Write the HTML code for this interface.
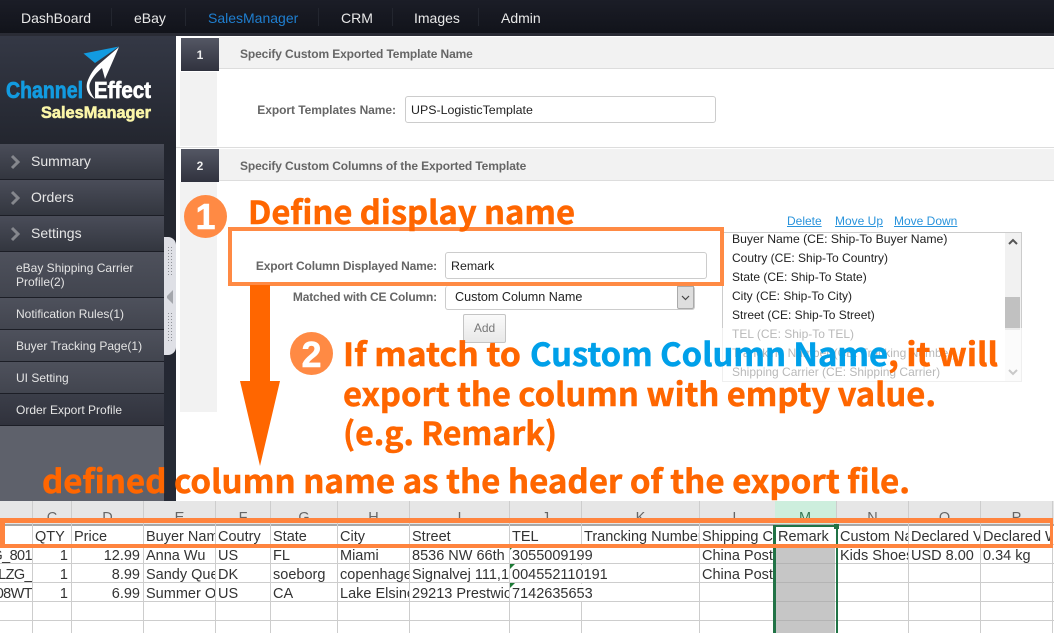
<!DOCTYPE html>
<html lang="en">
<head>
<meta charset="utf-8">
<title>Export Template</title>
<style>
html,body{margin:0;padding:0;background:#fff}
#p{position:relative;width:1054px;height:633px;overflow:hidden;background:#fff;font-family:"Liberation Sans",sans-serif}
#p div{position:absolute;box-sizing:border-box}
.nav{top:10px;font-size:14px;line-height:17px;color:#e8e8e8}
.sep{top:8px;width:1px;height:18px;background:#23262f}
.m{left:0;width:164px;background:linear-gradient(#4a4d59,#33363f);border-bottom:1px solid #1c1e26;color:#e6e6e6;font-size:14px}
.m span{position:absolute;left:31px;top:9px;line-height:17px}
.m svg{position:absolute;left:9px;top:10px}
.s{left:0;width:164px;background:linear-gradient(#4e515c,#42454f);border-bottom:1px solid #1c1e26;color:#e4e4e4;font-size:12px;line-height:14px;padding-left:16px}
.num{left:181px;width:38px;height:33px;background:linear-gradient(#545764,#30323e);color:#eee;font-weight:bold;font-size:12px;text-align:center;line-height:34px}
.band{left:219px;width:835px;height:32px;background:#f2f2f2;border-bottom:1px solid #ddd;color:#666;font-weight:bold;font-size:12px;line-height:34px;padding-left:21px;letter-spacing:-.12px}
.lbl{color:#666;font-weight:bold;font-size:12px;line-height:14px;white-space:nowrap;text-align:right;letter-spacing:-.17px}
.inp{background:#fff;border:1px solid #ccc;border-radius:3px;font-size:12.4px;color:#222;line-height:24px;padding-left:5px}
.lnk{top:214px;color:#2a94dc;font-size:12px;line-height:14px;text-decoration:underline}
.li{left:732px;font-size:12px;line-height:14px;color:#222;white-space:nowrap}
.h{top:508px;height:20px;text-align:center;color:#666;font-size:14.5px;line-height:20px}
.c{height:17px;margin-top:1px;font-size:14.5px;line-height:20px;color:#333;white-space:nowrap;overflow:hidden;padding-left:2px;font-family:"Liberation Sans","Noto Sans CJK SC",sans-serif}
.r{text-align:right;padding:0 3px 0 0}
.a{left:-20px;width:52px;padding:0;text-align:right;letter-spacing:-.6px}
.w{background:#fff}
.vl{top:501px;width:1px;height:132px;background:#cdcdcd}
.hl{left:0;width:1054px;height:1px;background:#cdcdcd}
.tri{width:0;height:0;border-top:5px solid #1d7a35;border-right:5px solid transparent}
</style>
</head>
<body>
<div id="p">
  <!-- top nav -->
  <div style="left:0;top:0;width:1054px;height:34px;background:linear-gradient(#1b1d27,#11131a)"></div>
  <div style="left:0;top:33px;width:1054px;height:3px;background:#2a2c35"></div>
  <div class="nav" style="left:21px">DashBoard</div>
  <div class="sep" style="left:111px"></div>
  <div class="nav" style="left:134px">eBay</div>
  <div class="sep" style="left:185px"></div>
  <div class="nav" style="left:208px;color:#1f7fd0">SalesManager</div>
  <div class="sep" style="left:318px"></div>
  <div class="nav" style="left:341px">CRM</div>
  <div class="sep" style="left:392px"></div>
  <div class="nav" style="left:414px">Images</div>
  <div class="sep" style="left:478px"></div>
  <div class="nav" style="left:501px">Admin</div>

  <!-- sidebar -->
  <div style="left:0;top:36px;width:176px;height:465px;background:linear-gradient(#343845 0,#23262f 108px,#262a35 100%)"></div>
  <svg style="position:absolute;left:0;top:36px" width="164" height="108">
    <path d="M83.500 17.500L119 10.500L95 27Z" fill="#129be0"/>
    <path d="M119 11L98 29C94 33 91 37 88 44C85 51 87 59 95 63C91 58 88 52 90 47C92 42 97 36 102 32L105 43Z" fill="#fff"/>
    <text x="6" y="62" font-family="Liberation Sans" font-weight="bold" font-size="23" fill="#129be0" stroke="#129be0" stroke-width=".7" textLength="77" lengthAdjust="spacingAndGlyphs">Channel</text>
    <text x="94" y="62" font-family="Liberation Sans" font-weight="bold" font-size="23" fill="#fff" stroke="#fff" stroke-width=".7" textLength="57" lengthAdjust="spacingAndGlyphs">Effect</text>
    <text x="41" y="82" font-family="Liberation Sans" font-weight="bold" font-size="17" fill="#fbf6a8" stroke="#fbf6a8" stroke-width=".6" textLength="110" lengthAdjust="spacingAndGlyphs">SalesManager</text>
  </svg>
  <div class="m" style="top:144px;height:36px"><svg width="12" height="16"><path d="M3 2L9 8L3 14" fill="none" stroke="#85878d" stroke-width="3"/></svg><span>Summary</span></div>
  <div class="m" style="top:180px;height:36px"><svg width="12" height="16"><path d="M3 2L9 8L3 14" fill="none" stroke="#85878d" stroke-width="3"/></svg><span>Orders</span></div>
  <div class="m" style="top:216px;height:36px"><svg width="12" height="16"><path d="M3 2L9 8L3 14" fill="none" stroke="#85878d" stroke-width="3"/></svg><span>Settings</span></div>
  <div class="s" style="top:252px;height:46px;padding-top:9px">eBay Shipping Carrier<br>Profile(2)</div>
  <div class="s" style="top:298px;height:32px;padding-top:9px">Notification Rules(1)</div>
  <div class="s" style="top:330px;height:32px;padding-top:9px">Buyer Tracking Page(1)</div>
  <div class="s" style="top:362px;height:32px;padding-top:9px">UI Setting</div>
  <div class="s" style="top:394px;height:32px;padding-top:9px;background:linear-gradient(#3b3e49,#30323c)">Order Export Profile</div>
  <div style="left:0;top:426px;width:164px;height:75px;background:#5e616b"></div>
  <!-- splitter -->
  <div style="left:164px;top:237px;width:12px;height:118px;background:#dfe0e6;border-radius:0 8px 8px 0"></div>
  <svg style="position:absolute;left:164px;top:237px" width="12" height="118">
    <path d="M3 59L9 53V67L3 61Z" fill="#a4a6ac"/>
    <g fill="#8e9096">
    <path d="M4 10h1v1h-1zM7 10h1v1h-1zM4 13h1v1h-1zM7 13h1v1h-1zM4 16h1v1h-1zM7 16h1v1h-1zM4 19h1v1h-1zM7 19h1v1h-1zM4 22h1v1h-1zM7 22h1v1h-1zM4 25h1v1h-1zM7 25h1v1h-1zM4 28h1v1h-1zM7 28h1v1h-1zM4 31h1v1h-1zM7 31h1v1h-1zM4 34h1v1h-1zM7 34h1v1h-1zM4 37h1v1h-1zM7 37h1v1h-1zM4 76h1v1h-1zM7 76h1v1h-1zM4 79h1v1h-1zM7 79h1v1h-1zM4 82h1v1h-1zM7 82h1v1h-1zM4 85h1v1h-1zM7 85h1v1h-1zM4 88h1v1h-1zM7 88h1v1h-1zM4 91h1v1h-1zM7 91h1v1h-1zM4 94h1v1h-1zM7 94h1v1h-1zM4 97h1v1h-1zM7 97h1v1h-1zM4 100h1v1h-1zM7 100h1v1h-1zM4 103h1v1h-1zM7 103h1v1h-1z"/></g>
  </svg>

  <!-- section 1 -->
  <div class="band" style="top:37px">Specify Custom Exported Template Name</div>
  <div class="num" style="top:38px">1</div>
  <div style="left:180px;top:72px;width:37px;height:74px;background:#f2f2f2"></div>
  <div class="lbl" style="left:200px;top:103px;width:196px;letter-spacing:-.05px">Export Templates Name:</div>
  <div class="inp" style="left:405px;top:96px;width:311px;height:27px;line-height:26px;padding-left:5px">UPS-LogisticTemplate</div>
  <div style="left:176px;top:147px;width:878px;height:1px;background:#ddd"></div>

  <!-- section 2 -->
  <div class="band" style="top:149px">Specify Custom Columns of the Exported Template</div>
  <div class="num" style="top:149px">2</div>
  <div style="left:180px;top:182px;width:37px;height:230px;background:#f2f2f2"></div>

  <div class="lnk" style="left:787px">Delete</div>
  <div class="lnk" style="left:835px">Move Up</div>
  <div class="lnk" style="left:894px">Move Down</div>

  <!-- listbox -->
  <div style="left:722px;top:232px;width:300px;height:150px;background:#fff;border:1px solid #ccc"></div>
  <div style="left:1005px;top:233px;width:16px;height:148px;background:#f1f1f1"></div>
  <div style="left:1005px;top:297px;width:15px;height:33px;background:#c1c1c1"></div>
  <svg style="position:absolute;left:1005px;top:233px" width="16" height="148">
    <path d="M4 11L8 7L12 11" fill="none" stroke="#555" stroke-width="2"/>
    <path d="M4 137L8 141L12 137" fill="none" stroke="#555" stroke-width="2"/>
  </svg>
  <div class="li" style="top:232px;font-size:12.2px">Buyer Name (CE: Ship-To Buyer Name)</div>
  <div class="li" style="top:251px">Coutry (CE: Ship-To Country)</div>
  <div class="li" style="top:270px">State (CE: Ship-To State)</div>
  <div class="li" style="top:289px">City (CE: Ship-To City)</div>
  <div class="li" style="top:308px">Street (CE: Ship-To Street)</div>
  <div class="li" style="top:327px">TEL (CE: Ship-To TEL)</div>
  <div class="li" style="top:346px">Trancking Number (CE: Tracking Number)</div>
  <div class="li" style="top:365px">Shipping Carrier (CE: Shipping Carrier)</div>
  <div style="left:722px;top:328px;width:300px;height:55px;background:rgba(255,255,255,.68)"></div>

  <!-- form rows -->
  <div style="left:228px;top:227px;width:496px;height:59px;border:4px solid #ff8a44;background:#fff"></div>
  <div class="lbl" style="left:200px;top:259px;width:237px">Export Column Displayed Name:</div>
  <div class="inp" style="left:445px;top:252px;width:262px;height:27px;line-height:26px;padding-left:5px">Remark</div>
  <div style="left:228px;top:282px;width:496px;height:4px;background:#ff8a44"></div>
  <div class="lbl" style="left:200px;top:290px;width:237px">Matched with CE Column:</div>
  <div class="inp" style="left:445px;top:286px;width:250px;height:24px;line-height:22px;padding-left:9px;border-top:0;font-size:12.6px">Custom Column Name</div>
  <div style="left:677px;top:286px;width:17px;height:23px;background:#dedede;border:1px solid #aaa;border-radius:0 0 2px 2px"></div>
  <svg style="position:absolute;left:677px;top:286px" width="17" height="23"><path d="M5 10L8.500 13.500L12 10" fill="none" stroke="#444" stroke-width="1.200"/></svg>
  <div style="left:463px;top:314px;width:43px;height:29px;background:linear-gradient(#fafafa,#e8e8e8);border:1px solid #c4c4c4;border-radius:2px;color:#777;font-size:12px;line-height:27px;text-align:center">Add</div>

  <!-- spreadsheet -->
  <div style="left:0;top:501px;width:1054px;height:24px;background:#e6e6e6"></div>
  <div style="left:775px;top:501px;width:62px;height:24px;background:#cdeedd"></div>
  <div style="left:0;top:524px;width:1054px;height:2px;background:#a8a8a8"></div>
  <div class="hl" style="top:544px"></div>
  <div class="hl" style="top:563px"></div>
  <div class="hl" style="top:582px"></div>
  <div class="hl" style="top:601px"></div>
  <div class="hl" style="top:620px"></div>
  <div class="vl" style="left:32px"></div><div class="vl" style="left:71px"></div><div class="vl" style="left:143px"></div>
  <div class="vl" style="left:215px"></div><div class="vl" style="left:270px"></div><div class="vl" style="left:337px"></div>
  <div class="vl" style="left:409px"></div><div class="vl" style="left:509px"></div><div class="vl" style="left:581px"></div>
  <div class="vl" style="left:699px"></div><div class="vl" style="left:836px"></div><div class="vl" style="left:908px"></div>
  <div class="vl" style="left:980px"></div><div class="vl" style="left:1052px"></div>
  <div style="left:775px;top:544px;width:60px;height:89px;background:#c6c6c6"></div>
  <div style="left:775px;top:563px;width:60px;height:1px;background:#b4b4b4"></div>
  <div style="left:775px;top:582px;width:60px;height:1px;background:#b4b4b4"></div>
  <div style="left:775px;top:601px;width:60px;height:1px;background:#b4b4b4"></div>
  <div style="left:775px;top:620px;width:60px;height:1px;background:#b4b4b4"></div>
  <div style="left:773px;top:525px;width:3px;height:108px;background:#217346"></div>
  <div style="left:836px;top:525px;width:2px;height:108px;background:#217346"></div>
  <div style="left:773px;top:525px;width:65px;height:2px;background:#217346"></div>
  <div style="left:834px;top:524px;width:5px;height:5px;background:#217346"></div>

  <div class="h" style="left:33px;width:38px">C</div><div class="h" style="left:72px;width:71px">D</div>
  <div class="h" style="left:144px;width:71px">E</div><div class="h" style="left:216px;width:54px">F</div>
  <div class="h" style="left:271px;width:66px">G</div><div class="h" style="left:338px;width:71px">H</div>
  <div class="h" style="left:410px;width:99px">I</div><div class="h" style="left:510px;width:71px">J</div>
  <div class="h" style="left:582px;width:117px">K</div><div class="h" style="left:700px;width:73px">L</div>
  <div class="h" style="left:775px;width:60px;color:#3a7a58">M</div><div class="h" style="left:837px;width:71px">N</div>
  <div class="h" style="left:909px;width:71px">O</div><div class="h" style="left:981px;width:71px">P</div>

  <!-- header row -->
  <div class="c" style="left:33px;top:526px;width:38px">QTY</div>
  <div class="c" style="left:72px;top:526px;width:71px">Price</div>
  <div class="c" style="left:144px;top:526px;width:71px">Buyer Name</div>
  <div class="c" style="left:216px;top:526px;width:54px">Coutry</div>
  <div class="c" style="left:271px;top:526px;width:66px">State</div>
  <div class="c" style="left:338px;top:526px;width:71px">City</div>
  <div class="c" style="left:410px;top:526px;width:99px">Street</div>
  <div class="c" style="left:510px;top:526px;width:71px">TEL</div>
  <div class="c" style="left:582px;top:526px;width:117px">Trancking Number</div>
  <div class="c" style="left:700px;top:526px;width:73px">Shipping Carrier</div>
  <div class="c" style="left:776px;top:526px;width:59px">Remark</div>
  <div class="c" style="left:838px;top:526px;width:70px">Custom Name</div>
  <div class="c" style="left:909px;top:526px;width:71px">Declared Value</div>
  <div class="c" style="left:981px;top:526px;width:71px">Declared Weight</div>

  <!-- row 1 -->
  <div class="c a" style="top:545px">G_801</div>
  <div class="c r" style="left:33px;top:545px;width:38px">1</div>
  <div class="c r" style="left:72px;top:545px;width:71px">12.99</div>
  <div class="c" style="left:144px;top:545px;width:71px">Anna Wu</div>
  <div class="c" style="left:216px;top:545px;width:54px">US</div>
  <div class="c" style="left:271px;top:545px;width:66px">FL</div>
  <div class="c" style="left:338px;top:545px;width:71px">Miami</div>
  <div class="c" style="left:410px;top:545px;width:99px">8536 NW 66th</div>
  <div class="c w" style="left:510px;top:545px;width:189px">3055009199</div>
  <div class="c" style="left:700px;top:545px;width:73px">China Post</div>
  <div class="c" style="left:838px;top:545px;width:70px">Kids Shoes</div>
  <div class="c" style="left:909px;top:545px;width:71px">USD 8.00</div>
  <div class="c" style="left:981px;top:545px;width:71px">0.34 kg</div>
  <!-- row 2 -->
  <div class="c a" style="top:564px">LZG_</div>
  <div class="c r" style="left:33px;top:564px;width:38px">1</div>
  <div class="c r" style="left:72px;top:564px;width:71px">8.99</div>
  <div class="c" style="left:144px;top:564px;width:71px">Sandy Quested</div>
  <div class="c" style="left:216px;top:564px;width:54px">DK</div>
  <div class="c" style="left:271px;top:564px;width:66px">soeborg</div>
  <div class="c" style="left:338px;top:564px;width:71px">copenhagen</div>
  <div class="c" style="left:410px;top:564px;width:99px">Signalvej 111,1</div>
  <div class="c w" style="left:510px;top:564px;width:189px">004552110191</div>
  <div class="c" style="left:700px;top:564px;width:73px">China Post</div>
  <!-- row 3 -->
  <div class="c a" style="top:583px">08WT</div>
  <div class="c r" style="left:33px;top:583px;width:38px">1</div>
  <div class="c r" style="left:72px;top:583px;width:71px">6.99</div>
  <div class="c" style="left:144px;top:583px;width:71px">Summer Olsen</div>
  <div class="c" style="left:216px;top:583px;width:54px">US</div>
  <div class="c" style="left:271px;top:583px;width:66px">CA</div>
  <div class="c" style="left:338px;top:583px;width:71px">Lake Elsinore</div>
  <div class="c" style="left:410px;top:583px;width:99px">29213 Prestwick</div>
  <div class="c w" style="left:510px;top:583px;width:189px">7142635653</div>
  <div class="tri" style="left:510px;top:545px"></div>
  <div class="tri" style="left:510px;top:564px"></div>
  <div class="tri" style="left:510px;top:583px"></div>

  <!-- sheet highlight -->
  <div style="left:0;top:518px;width:1053px;height:30px;border:solid #ff843e;border-width:5px 3px 4px 5px"></div>

  <!-- annotations -->
  <svg style="position:absolute;left:0;top:0" width="1054" height="633">
    <path d="M250 285H270V381H280L260 466L240 381H250Z" fill="#ff6600"/>
    <circle cx="205.500" cy="216.500" r="21.500" fill="#ff8a44"/>
    <circle cx="311.500" cy="353.500" r="21.500" fill="#ff8a44"/>
    <g font-family="Liberation Sans,sans-serif" font-weight="bold" fill="#fff" stroke="#fff" stroke-width=".5" text-anchor="middle">
      <text x="205.500" y="229" font-size="36">1</text>
      <text x="311.500" y="367" font-size="36">2</text>
    </g>
    <g font-family="'Noto Sans CJK SC','Liberation Sans',sans-serif" font-weight="700" fill="#ff6600" stroke="#ff6600" stroke-width=".5" font-size="32">
      <text x="248" y="224" textLength="327" lengthAdjust="spacingAndGlyphs">Define display name</text>
      <text x="343" y="366" textLength="178" lengthAdjust="spacingAndGlyphs">If match to</text>
      <text x="530" y="366" textLength="358" lengthAdjust="spacingAndGlyphs" fill="#00a0e9" stroke="#00a0e9">Custom Column Name</text>
      <text x="888" y="366" textLength="110" lengthAdjust="spacingAndGlyphs">, it will</text>
      <text x="343" y="406" textLength="593" lengthAdjust="spacingAndGlyphs">export the column with empty value.</text>
      <text x="343" y="445" textLength="214" lengthAdjust="spacingAndGlyphs">(e.g. Remark)</text>
      <text x="42" y="493" textLength="868" lengthAdjust="spacingAndGlyphs">defined column name as the header of the export file.</text>
    </g>
  </svg>
</div>
</body>
</html>
